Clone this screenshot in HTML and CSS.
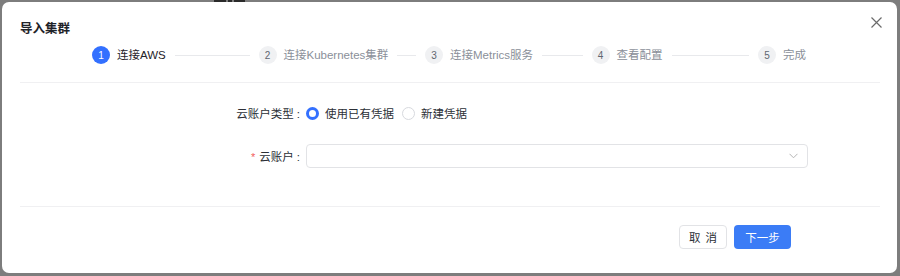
FILE: index.html
```html
<!DOCTYPE html>
<html lang="zh">
<head>
<meta charset="utf-8">
<link rel="stylesheet" href="styles.css">
</head>
<body>
<div class="backdrop"><span class="mark m1"></span><span class="mark m2"></span><span class="mark m3"></span></div>
<div class="modal">
  <div class="header">
    <div class="title">导入集群</div>
    <button class="close" aria-label="关闭">
      <svg width="11" height="11" viewBox="0 0 11 11"><path d="M0.5 0.5L10.5 10.5M10.5 0.5L0.5 10.5" stroke="#6b6b6b" stroke-width="1.2" fill="none"/></svg>
    </button>
  </div>
  <div class="steps">
    <div class="step active"><span class="num">1</span><span class="label">连接AWS</span><span class="line"></span></div>
    <div class="step"><span class="num">2</span><span class="label">连接Kubernetes集群</span><span class="line"></span></div>
    <div class="step"><span class="num">3</span><span class="label">连接Metrics服务</span><span class="line"></span></div>
    <div class="step"><span class="num">4</span><span class="label">查看配置</span><span class="line"></span></div>
    <div class="step last"><span class="num">5</span><span class="label">完成</span></div>
  </div>
  <div class="divider"></div>
  <div class="form">
    <div class="row">
      <div class="flabel">云账户类型<span class="colon">:</span></div>
      <div class="control radios">
        <label class="radio checked"><span class="dot"></span>使用已有凭据</label>
        <label class="radio"><span class="dot"></span>新建凭据</label>
      </div>
    </div>
    <div class="row row2">
      <div class="flabel"><span class="req">*</span>云账户<span class="colon">:</span></div>
      <div class="control">
        <div class="select">
          <svg class="arrow" width="9" height="6" viewBox="0 0 9 6"><path d="M0.5 0.8L4.5 4.8L8.5 0.8" stroke="#b5b5b5" stroke-width="1" fill="none"/></svg>
        </div>
      </div>
    </div>
  </div>
  <div class="divider bottom"></div>
  <div class="footer">
    <button class="btn cancel">取消</button>
    <button class="btn primary">下一步</button>
  </div>
</div>
</body>
</html>
```

FILE: styles.css
```css
* { box-sizing: border-box; }
html, body { margin: 0; padding: 0; }
body {
  width: 900px;
  height: 276px;
  background: #7d7d7d;
  font-family: "Liberation Sans", "Noto Sans CJK SC", sans-serif;
  font-size: 11.5px;
  color: #2b2f36;
  position: relative;
  overflow: hidden;
  padding: 2px 3px 3px 2px;
}
.backdrop { position: absolute; left: 0; top: 0; width: 900px; height: 2px; display: flex; }
.mark { position: absolute; top: 0; height: 2px; background: #2a2a2a; }
.m1 { left: 214px; width: 12px; }
.m2 { left: 228px; width: 4px; }
.m3 { left: 234px; width: 11px; }
.modal {
  position: relative;
  background: #fff;
  border-radius: 7px;
  height: 271px;
  width: 895px;
}
.header {
  display: flex;
  align-items: center;
  justify-content: space-between;
  padding: 16px 15px 0 18px;
  height: 36px;
}
.title { font-size: 12.5px; font-weight: 700; line-height: 20px; color: #1f2329; font-family: "Noto Sans CJK SC", sans-serif; }
.close { border: 0; background: none; padding: 0; width: 11px; height: 11px; display: flex; margin-top: -12px; }
.steps {
  display: flex;
  align-items: center;
  margin-top: 8px;
  padding: 0 91px 0 90px;
  height: 18px;
}
.step { flex: 1; display: flex; align-items: center; min-width: 0; }
.step.last { flex: none; }
.num {
  width: 18px; height: 18px; border-radius: 50%;
  background: #f0f1f3; color: #5f6670;
  font-size: 10px; display: flex; align-items: center; justify-content: center;
  flex: none;
}
.step.active .num { background: #3370ff; color: #fff; }
.label { margin-left: 7px; color: #8a8f99; white-space: nowrap; line-height: 18px; }
.step.active .label { color: #1f2329; }
.line { flex: 1; height: 1px; background: #e8e9ec; margin: 0 9px 0 9px; }
.divider { height: 1px; background: #f0f0f2; margin: 18px 17px 0 18px; }
.form { margin-top: 18px; }
.row { display: flex; align-items: center; height: 24px; }
.row2 { margin-top: 19px; }
.flabel { width: 298px; text-align: right; color: #2b2f36; white-space: nowrap; }
.colon { margin-left: 3px; }
.req { color: #f25c5c; margin-right: 4px; font-size: 11px; }
.control { margin-left: 6px; display: flex; align-items: center; }
.radio { display: flex; align-items: center; margin-right: 8px; color: #2b2f36; }
.dot {
  width: 13px; height: 13px; border-radius: 50%;
  border: 1px solid #d7d9de; margin-right: 6px; background: #fff;
}
.radio.checked .dot { border: 3.5px solid #3370ff; }
.select {
  width: 502px; height: 24px; border: 1px solid #e2e3e6; border-radius: 4px;
  display: flex; align-items: center; justify-content: flex-end; padding-right: 9px;
}
.divider.bottom { margin-top: 38px; }
.footer { display: flex; justify-content: flex-end; padding-right: 106px; margin-top: 18px; gap: 7px; }
.btn {
  height: 24px; border-radius: 4px; font-family: "Noto Sans CJK SC", sans-serif;
  font-size: 11.5px; padding: 0; display: flex; align-items: center; justify-content: center;
}
.cancel { width: 48px; border: 1px solid #e2e3e6; background: #fff; color: #2b2f36; letter-spacing: 5px; padding-left: 5px; }
.primary { width: 57px; border: 0; background: #3b7cf6; color: #fff; }
```
